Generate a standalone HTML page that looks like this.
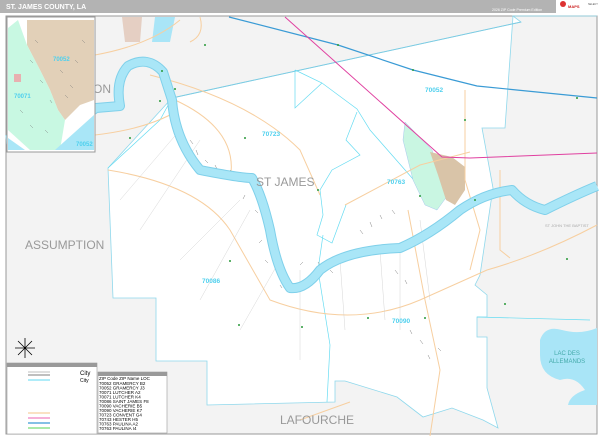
<!DOCTYPE html>
<html><head><meta charset="utf-8"><style>
html,body{margin:0;padding:0;width:600px;height:436px;overflow:hidden;background:#fff;font-family:"Liberation Sans",sans-serif}
</style></head><body>
<svg width="600" height="436" viewBox="0 0 600 436" xmlns="http://www.w3.org/2000/svg" font-family="Liberation Sans, sans-serif">
<rect x="0" y="0" width="600" height="13" fill="#b3b3b3"/>
<text x="6" y="9" font-size="7" font-weight="bold" fill="#fff">ST. JAMES COUNTY, LA</text>
<text x="492" y="11" font-size="3.5" fill="#fff">2026 ZIP Code Premium Edition</text>
<rect x="556" y="0" width="44" height="13" fill="#fff"/>
<circle cx="563" cy="4" r="3" fill="#d33"/>
<text x="568" y="8" font-size="4" font-weight="bold" fill="#c22">MAPS</text>
<text x="588" y="5" font-size="2.5" fill="#555">SELECT</text>
<rect x="6" y="16" width="591" height="418" fill="#f3f3f3" stroke="#9a9a9a" stroke-width="1"/>
<path d="M172,98 L521,22 L513,16 L597,16 L597,16 L513,16 L505,128 L482,128 L493,188 L480,275 L475,285 L487,295 L487,317 L477,317 L477,337 L487,337 L487,388 L498,428 L483,420 L452,408 L423,417 L397,397 L345,381 L335,381 L335,402 L207,405 L207,361 L156,361 L156,298 L113,298 L108,168 Z" fill="#fff" stroke="#8fd8ec" stroke-width="0.8"/>
<path d="M172,98 L521,22" stroke="#7ccbe2" stroke-width="1" fill="none"/>
<g stroke="#66dcf2" stroke-width="0.7" fill="none">
<path d="M295,70 L322,83 L357,109 L370,130 L427,195 L437,210"/>
<path d="M357,112 L346,140 L360,155 L332,170 L320,190 L323,215 L317,235 L332,243 L346,205"/>
<path d="M295,70 L295,108 L322,83"/>
<path d="M108,168 L160,120 L172,98"/>
<path d="M323,235 L318,270 L330,345 L327,402"/>
<path d="M477,317 L590,320"/>
</g>
<path d="M405,122 L432,150 L448,195 L437,210 L425,205 L413,180 L403,140 Z" fill="#c9f6e2" stroke="#9be" stroke-width="0.4"/>
<path d="M430,152 L452,157 L465,167 L465,190 L455,205 L446,200 L438,175 Z" fill="#d9c4a8"/>
<path d="M155,17 L175,17 L170,42 L152,42 Z" fill="#a9e5f7"/>
<path d="M122,17 L142,17 L140,42 L125,42 Z" fill="#e5cfc3"/>
<path d="M540,340 Q545,325 562,330 Q580,335 597,328 L597,405 L568,405 Q570,395 585,390 Q575,375 560,380 Q540,375 540,355 Z" fill="#a9e5f7"/>
<text x="567" y="355" font-size="6" fill="#4aa" text-anchor="middle">LAC DES</text>
<text x="567" y="363" font-size="6" fill="#4aa" text-anchor="middle">ALLEMANDS</text>
<g stroke="#f7cfa0" stroke-width="1" fill="none">
<path d="M108,170 Q200,185 230,230 L270,300 Q350,330 420,300 L487,270 Q540,255 597,225"/>
<path d="M150,75 Q250,100 300,150 L320,195"/>
<path d="M175,100 Q240,130 230,180"/>
<path d="M345,205 L420,165 L470,152"/>
<path d="M408,210 L425,300 L440,370 L430,436"/>
<path d="M465,90 L465,180 L480,230 L470,270"/>
<path d="M500,170 L500,250 L510,258"/>
<path d="M95,55 Q150,45 180,20"/>
<path d="M190,42 Q205,35 200,17"/>
<path d="M95,135 Q140,130 170,115"/>
<path d="M300,420 L350,402"/>
</g>
<g stroke="#ccc" stroke-width="0.4" fill="none">
<path d="M180,130 L120,200 M200,140 L140,230 M240,200 L180,260 M250,210 L200,300 M280,260 L240,330 M300,270 L300,360 M340,260 L345,330 M380,250 L385,320 M400,250 L400,330 M420,220 L430,300"/>
</g>
<g stroke="#888" stroke-width="0.5" fill="none">
<path d="M190,140 l3,4 M196,150 l2,5 M205,160 l3,3 M215,165 l2,4 M230,170 l3,3 M245,195 l-2,4 M255,210 l3,3 M262,240 l-3,3 M265,260 l3,3 M280,285 l2,3 M300,265 l3,-3 M318,262 l2,3 M360,230 l3,4 M370,222 l2,5 M380,215 l2,4 M392,210 l3,4 M410,330 l2,4 M420,340 l3,4 M428,355 l2,4 M438,348 l3,3 M395,270 l3,4 M405,280 l2,4 M315,275 l3,3 M330,270 l3,3"/>
</g>
<path d="M229,17 L338,45 L413,70 L477,86 L597,98" stroke="#3a9bd5" stroke-width="1.2" fill="none"/>
<path d="M285,17 L442,157 L470,158 L597,153" stroke="#e040a0" stroke-width="1" fill="none"/>
<path d="M6,140 Q60,135 96,108 L120,106 Q115,80 128,66 Q148,55 163,72 L172,100 Q175,140 200,170 Q240,178 252,178 Q262,195 270,230 Q277,270 290,288 Q305,290 320,270 Q345,250 400,248 Q430,235 460,210 Q485,193 512,190 Q525,205 545,210 Q575,195 597,186" stroke="#7fd0ea" stroke-width="10" fill="none" stroke-linejoin="round"/>
<path d="M6,140 Q60,135 96,108 L120,106 Q115,80 128,66 Q148,55 163,72 L172,100 Q175,140 200,170 Q240,178 252,178 Q262,195 270,230 Q277,270 290,288 Q305,290 320,270 Q345,250 400,248 Q430,235 460,210 Q485,193 512,190 Q525,205 545,210 Q575,195 597,186" stroke="#a9e6f7" stroke-width="8" fill="none" stroke-linejoin="round"/>
<g fill="#2a9a3a">
<circle cx="162" cy="71" r="1"/><circle cx="175" cy="89" r="1"/><circle cx="160" cy="101" r="1"/><circle cx="245" cy="138" r="1"/><circle cx="318" cy="190" r="1"/><circle cx="230" cy="261" r="1"/><circle cx="239" cy="325" r="1"/><circle cx="302" cy="327" r="1"/><circle cx="368" cy="318" r="1"/><circle cx="425" cy="318" r="1"/><circle cx="465" cy="120" r="1"/><circle cx="475" cy="200" r="1"/><circle cx="505" cy="304" r="1"/><circle cx="567" cy="259" r="1"/><circle cx="338" cy="45" r="1"/><circle cx="413" cy="70" r="1"/><circle cx="577" cy="98" r="1"/><circle cx="205" cy="45" r="1"/><circle cx="130" cy="138" r="1"/><circle cx="420" cy="196" r="1"/>
</g>
<g fill="#999" font-size="12">
<text x="256" y="186">ST JAMES</text>
<text x="25" y="249">ASSUMPTION</text>
<text x="93" y="93">ON</text>
<text x="280" y="424">LAFOURCHE</text>
</g>
<g fill="#4fd0ee" font-size="6.5" font-weight="bold">
<text x="262" y="136">70723</text>
<text x="425" y="92">70052</text>
<text x="387" y="184">70763</text>
<text x="202" y="283">70086</text>
<text x="392" y="323">70090</text>
</g>
<text x="545" y="227" font-size="4" fill="#aaa">ST JOHN THE BAPTIST</text>
<rect x="7" y="17" width="88" height="135" fill="#fff" stroke="#999" stroke-width="1"/>
<path d="M27,20 L94,20 L94,100 L80,105 L65,120 L58,110 L50,90 L40,70 L27,45 Z" fill="#e2d0b8"/>
<path d="M8,28 L18,20 L27,45 L40,70 L50,90 L58,110 L65,120 L60,150 L30,150 L8,130 Z" fill="#c8f8e2"/>
<path d="M55,150 L94,115 L94,150 Z" fill="#a9e6f7"/>
<path d="M8,138 L25,150 L8,150 Z" fill="#a9e6f7"/>
<rect x="14" y="74" width="7" height="8" fill="#e8b0b0"/>
<g stroke="#777" stroke-width="0.4"><path d="M30,60 l3,3 M40,80 l3,3 M50,100 l2,3 M60,70 l3,3 M70,85 l3,3 M75,60 l3,3 M20,110 l3,3 M30,125 l3,3 M45,130 l3,3 M65,95 l3,3 M35,40 l3,3 M82,40 l3,3"/></g>
<text x="53" y="61" font-size="6" font-weight="bold" fill="#4fd0ee">70052</text>
<text x="14" y="98" font-size="6" font-weight="bold" fill="#4fd0ee">70071</text>
<text x="76" y="146" font-size="6" font-weight="bold" fill="#4fd0ee">70052</text>
<g stroke="#000" stroke-width="0.8">
<path d="M25,338 L25,358 M15,348 L35,348 M18,341 L32,355 M32,341 L18,355"/>
</g>
<rect x="7" y="363" width="90" height="71" fill="#fff" stroke="#999" stroke-width="0.6"/>
<rect x="7" y="363" width="90" height="4" fill="#999"/>
<g stroke-width="1.2">
<line x1="28" y1="372" x2="50" y2="372" stroke="#ccc"/>
<line x1="28" y1="375" x2="50" y2="375" stroke="#999"/>
<line x1="28" y1="380" x2="50" y2="380" stroke="#7fe0f5"/>
<line x1="28" y1="413" x2="50" y2="413" stroke="#f7cfa0"/>
<line x1="28" y1="418" x2="50" y2="418" stroke="#f080c0"/>
<line x1="28" y1="423" x2="50" y2="423" stroke="#3a9bd5"/>
<line x1="28" y1="428" x2="50" y2="428" stroke="#7d7"/>
</g>
<text x="80" y="375" font-size="6">City</text>
<text x="80" y="382" font-size="5">City</text>
<rect x="98" y="372" width="69" height="61" fill="#fff" stroke="#999" stroke-width="0.6"/>
<rect x="98" y="372" width="69" height="4" fill="#999"/>
<g font-size="4.5" fill="#000">
<text x="99" y="380">ZIP Code  ZIP Name     LOC</text>
<text x="99" y="385">70052    GRAMERCY     B2</text>
<text x="99" y="389.5">70052    GRAMERCY     J3</text>
<text x="99" y="394">70071    LUTCHER      A2</text>
<text x="99" y="398.5">70071    LUTCHER      K4</text>
<text x="99" y="403">70086    SAINT JAMES  F8</text>
<text x="99" y="407.5">70090    VACHERIE     B5</text>
<text x="99" y="412">70090    VACHERIE     K7</text>
<text x="99" y="416.5">70723    CONVENT      G4</text>
<text x="99" y="421">70743    HESTER       H5</text>
<text x="99" y="425.5">70763    PAULINA      A2</text>
<text x="99" y="430">70763    PAULINA      I4</text>
</g>
</svg>
</body></html>
